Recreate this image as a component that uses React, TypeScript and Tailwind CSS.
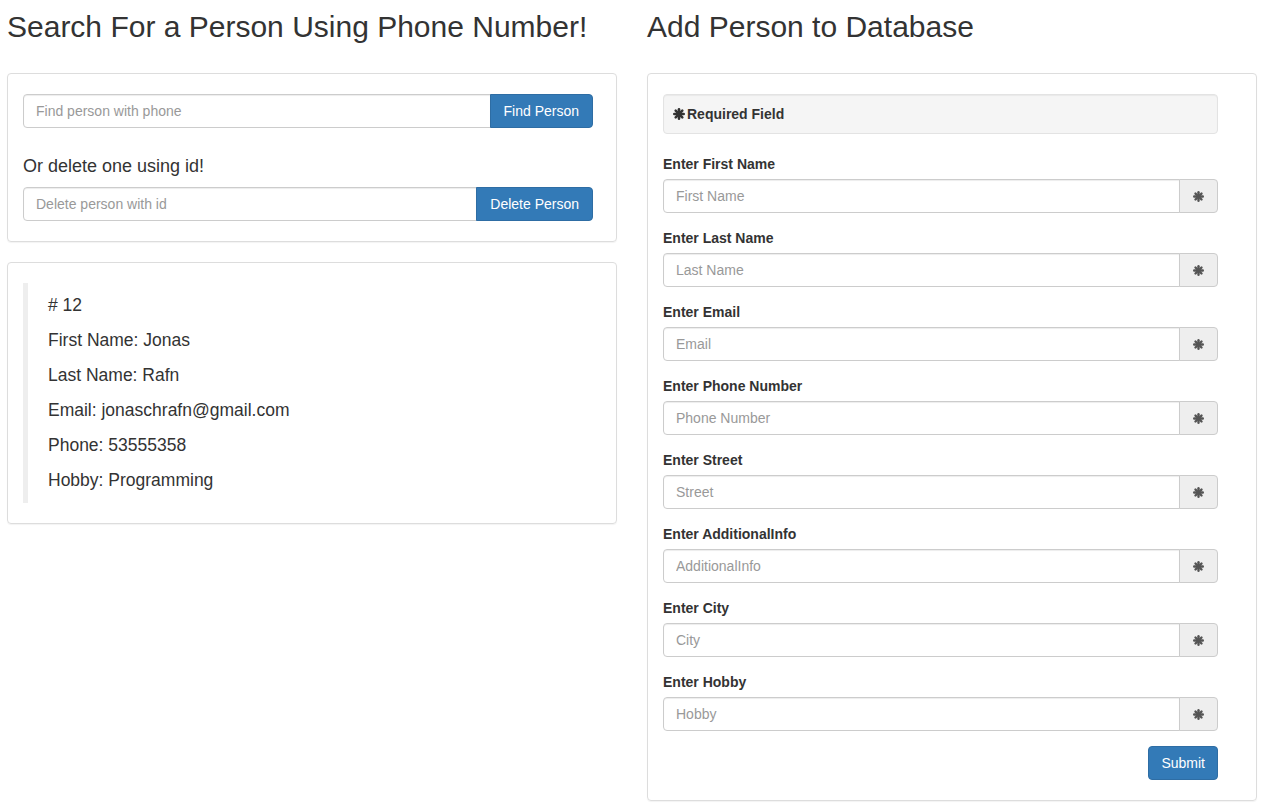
import React from 'react';

const font = { fontFamily: '"Liberation Sans", Arial, Helvetica, sans-serif' };

function Asterisk({ className = '' }: { className?: string }) {
  return (
    <svg viewBox="0 0 12 12" className={className} aria-hidden="true">
      <g stroke="currentColor" strokeWidth="2.6" strokeLinecap="round">
        <line x1="6" y1="1.3" x2="6" y2="10.7" />
        <line x1="1.3" y1="6" x2="10.7" y2="6" />
        <line x1="2.7" y1="2.7" x2="9.3" y2="9.3" />
        <line x1="9.3" y1="2.7" x2="2.7" y2="9.3" />
      </g>
    </svg>
  );
}

const inputCls =
  'flex-1 min-w-0 h-[34px] px-3 text-[14px] text-[#555] bg-white border border-[#ccc] shadow-[inset_0_1px_1px_rgba(0,0,0,0.075)] placeholder:text-[#999] outline-none';

const fields = [
  ['Enter First Name', 'First Name'],
  ['Enter Last Name', 'Last Name'],
  ['Enter Email', 'Email'],
  ['Enter Phone Number', 'Phone Number'],
  ['Enter Street', 'Street'],
  ['Enter AdditionalInfo', 'AdditionalInfo'],
  ['Enter City', 'City'],
  ['Enter Hobby', 'Hobby'],
];

const person = [
  '# 12',
  'First Name: Jonas',
  'Last Name: Rafn',
  'Email: jonaschrafn@gmail.com',
  'Phone: 53555358',
  'Hobby: Programming',
];

export default function App() {
  return (
    <div style={font} className="min-h-screen bg-white text-[#333] text-[14px] leading-[20px]">
      <div className="flex gap-[30px] pl-[7px]">

        {/* ── Left: search / delete ── */}
        <div className="w-[610px] flex-shrink-0">
          <h2 className="mt-[10px] mb-[30px] text-[30px] leading-[33px] font-normal">
            Search For a Person Using Phone Number!
          </h2>

          <div className="border border-[#ddd] rounded-[4px] shadow-[0_1px_1px_rgba(0,0,0,0.05)] pt-[20px] pb-[20px] pl-[15px] pr-[23px]">
            <div className="flex">
              <input className={`${inputCls} rounded-l-[4px]`} placeholder="Find person with phone" />
              <button className="h-[34px] px-[13px] text-[14px] text-white bg-[#337ab7] border border-[#2e6da4] -ml-px rounded-r-[4px]">
                Find Person
              </button>
            </div>
            <p className="mt-[27px] mb-[10px] text-[18px] leading-[22px]">Or delete one using id!</p>
            <div className="flex">
              <input className={`${inputCls} rounded-l-[4px]`} placeholder="Delete person with id" />
              <button className="h-[34px] px-[13px] text-[14px] text-white bg-[#337ab7] border border-[#2e6da4] -ml-px rounded-r-[4px]">
                Delete Person
              </button>
            </div>
          </div>

          <div className="mt-[20px] border border-[#ddd] rounded-[4px] shadow-[0_1px_1px_rgba(0,0,0,0.05)] pt-[20px] px-[15px]">
            <div className="border-l-[5px] border-[#eee] py-[10px] px-[20px] mb-[20px] text-[17.5px] leading-[25px]">
              {person.map((line, i) => (
                <p key={i} className={i === person.length - 1 ? '' : 'mb-[10px]'}>{line}</p>
              ))}
            </div>
          </div>
        </div>

        {/* ── Right: add person form ── */}
        <div className="w-[610px] flex-shrink-0">
          <h2 className="mt-[10px] mb-[30px] text-[30px] leading-[33px] font-normal">
            Add Person to Database
          </h2>

          <div className="border border-[#ddd] rounded-[4px] shadow-[0_1px_1px_rgba(0,0,0,0.05)] pt-[20px] pb-[20px] pl-[15px] pr-[38px]">
            <div className="flex items-center h-[40px] px-[9px] bg-[#f5f5f5] border border-[#e3e3e3] rounded-[4px] shadow-[inset_0_1px_1px_rgba(0,0,0,0.05)] mb-[20px] font-bold">
              <Asterisk className="w-[12px] h-[12px] mr-[2px] text-[#333]" />
              Required Field
            </div>

            {fields.map(([label, ph]) => (
              <div key={label} className="mb-[15px]">
                <label className="block font-bold mb-[5px]">{label}</label>
                <div className="flex">
                  <input className={`${inputCls} rounded-l-[4px]`} placeholder={ph} />
                  <span className="w-[39px] h-[34px] flex items-center justify-center bg-[#eee] border border-[#ccc] -ml-px rounded-r-[4px] text-[#555]">
                    <Asterisk className="w-[11px] h-[11px]" />
                  </span>
                </div>
              </div>
            ))}

            <div className="flex justify-end">
              <button className="h-[34px] px-3 text-[14px] text-white bg-[#337ab7] border border-[#2e6da4] rounded-[4px]">
                Submit
              </button>
            </div>
          </div>
        </div>

      </div>
    </div>
  );
}
